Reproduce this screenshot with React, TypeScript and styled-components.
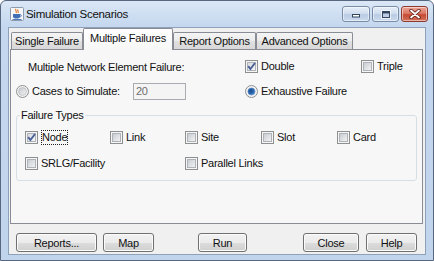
import React from 'react';
import styled, { createGlobalStyle } from 'styled-components';

const GlobalStyle = createGlobalStyle`
  html, body { margin: 0; padding: 0; background: #ffffff; }
  body {
    font-family: 'Liberation Sans', Arial, sans-serif;
    font-size: 11px;
    color: #111;
  }
`;

const Window = styled.div`
  box-sizing: border-box;
  width: 434px;
  height: 261px;
  display: flex;
  flex-direction: column;
  border: 1px solid #56677f;
  border-radius: 6px 6px 0 0;
  background: linear-gradient(#dae7f6, #c4d7ee 26px, #c0d4ec);
  overflow: hidden;
`;

const TitleBar = styled.div`
  height: 26px;
  display: flex;
  align-items: center;
  padding: 0 5px 0 9px;
`;

const TitleText = styled.span`
  margin-left: 2px;
  font-size: 11.5px;
  letter-spacing: -0.3px;
  line-height: 26px;
  color: #111;
`;

const CaptionGroup = styled.div`
  display: flex;
  gap: 2px;
  margin-left: auto;
  align-self: flex-start;
  margin-top: 5px;
`;

const CaptionButton = styled.div<{ $w: number; $close?: boolean }>`
  box-sizing: border-box;
  width: ${p => p.$w}px;
  height: 16px;
  display: flex;
  align-items: center;
  justify-content: center;
  border: 1px solid ${p => (p.$close ? '#8e3b2e' : '#7a8da7')};
  border-radius: 3px;
  background: ${p =>
    p.$close
      ? 'linear-gradient(#eda596, #dc7a66 45%, #c64b33 55%, #d2705a)'
      : 'linear-gradient(#e6eef8, #d2deef 45%, #b9cbe3 55%, #cbdaee)'};
  box-shadow: inset 0 0 0 1px rgba(255, 255, 255, 0.5);
`;

const Client = styled.div`
  flex: 1;
  margin: 0 7px 5px;
  border: 1px solid #8ea1ba;
  background: #f0f0f0;
  display: flex;
  flex-direction: column;
  letter-spacing: -0.25px;
`;

const TabStrip = styled.div`
  height: 21px;
  display: flex;
  align-items: flex-end;
  padding-left: 2px;
  position: relative;
  z-index: 1;
`;

const Tab = styled.div<{ $w: number; $active?: boolean }>`
  box-sizing: border-box;
  position: relative;
  width: ${p => p.$w}px;
  height: ${p => (p.$active ? 22 : 17)}px;
  margin-bottom: ${p => (p.$active ? -1 : 0)}px;
  padding-top: ${p => (p.$active ? 2 : 1)}px;
  border: 1px solid #898c95;
  border-bottom: none;
  border-radius: 2px 2px 0 0;
  line-height: 14px;
  text-align: center;
  white-space: nowrap;
  background: ${p =>
    p.$active
      ? 'linear-gradient(#ffffff, #f7f7f7)'
      : 'linear-gradient(#f4f4f4, #ebebeb 50%, #e0e0e0 51%, #d8d8d8)'};
`;

const Panel = styled.div`
  flex: 1;
  margin: 0 2px 0 1px;
  border: 1px solid #898c95;
  background: #f7f7f7;
  padding: 8px 5px 0;
`;

const OptionGrid = styled.div`
  display: grid;
  grid-template-columns: 229px 116px auto;
  grid-template-rows: 17px 18px;
  row-gap: 7px;
  align-items: center;
`;

const FieldLabel = styled.span<{ $indent?: number; $w?: number }>`
  padding-left: ${p => p.$indent ?? 0}px;
  width: ${p => (p.$w ? `${p.$w}px` : 'auto')};
  white-space: nowrap;
`;

const Item = styled.label`
  display: flex;
  align-items: center;
  gap: 3px;
  white-space: nowrap;
`;

const ItemText = styled.span<{ $focus?: boolean }>`
  border: ${p => (p.$focus ? '1px dotted #222' : 'none')};
  line-height: 13px;
`;

const NumberInput = styled.div`
  box-sizing: border-box;
  width: 53px;
  height: 17px;
  border: 1px solid #a9abb0;
  background: #f4f4f4;
  color: #6d6d6d;
  padding-left: 2px;
  line-height: 15px;
`;

const Group = styled.fieldset`
  margin: 9px 0 0;
  padding: 0;
  border: 1px solid #d5dfe5;
  border-radius: 3px;
  min-width: 0;
`;

const Legend = styled.legend`
  margin-left: 3px;
  padding: 0 1px;
  line-height: 13px;
`;

const TypeGrid = styled.div`
  display: grid;
  grid-template-columns: 85px 75px 76px 76px auto;
  grid-auto-rows: 15px;
  row-gap: 11px;
  align-items: center;
  padding: 8px 0 9px 8px;
`;

const ButtonBar = styled.div`
  height: 30px;
  box-sizing: border-box;
  display: flex;
  align-items: flex-start;
  padding: 9px 8px 0 7px;
`;

const ButtonGroup = styled.div<{ $gap: number; $push?: boolean }>`
  display: flex;
  gap: ${p => p.$gap}px;
  margin-left: ${p => (p.$push ? 'auto' : '0')};
`;

const Button = styled.button<{ $w: number; $offset?: number }>`
  box-sizing: border-box;
  width: ${p => p.$w}px;
  height: 19px;
  margin-left: ${p => p.$offset ?? 0}px;
  padding: 0;
  border: 1px solid #707070;
  border-radius: 3px;
  background: linear-gradient(#f2f2f2, #ebebeb 50%, #dddddd 51%, #cfcfcf);
  box-shadow: inset 0 0 0 1px #fbfbfb;
  font: inherit;
  letter-spacing: inherit;
  color: #111;
`;

const JavaIcon = () => (
  <svg width="14" height="14" viewBox="0 0 14 14">
    <rect x="0.5" y="0.5" width="13" height="13" rx="1" fill="#f4f6fa" stroke="#8c9aae" />
    <path d="M6 2 C4.5 3.5 7.5 4 6 6 M8 2.5 C7 3.5 9 4.5 8 6" stroke="#e0701c" strokeWidth="1.1" fill="none" />
    <path d="M3 7 H10 V9.5 C10 11 8.5 11.5 6.5 11.5 C4.5 11.5 3 11 3 9.5 Z" fill="#3f6eb5" />
    <path d="M10 7.6 C11.8 7.6 11.8 9.8 9.8 9.8" stroke="#3f6eb5" strokeWidth="1" fill="none" />
    <rect x="2.5" y="12" width="9" height="0.9" fill="#3f6eb5" />
  </svg>
);

const MinGlyph = () => (
  <svg width="10" height="8" viewBox="0 0 10 8">
    <rect x="1.5" y="4.5" width="7" height="2.5" fill="#fff" stroke="#33465f" />
  </svg>
);

const MaxGlyph = () => (
  <svg width="10" height="9" viewBox="0 0 10 9">
    <rect x="1.5" y="1.5" width="7" height="6" fill="none" stroke="#33465f" strokeWidth="1" />
    <rect x="2" y="2" width="6" height="1.5" fill="#33465f" />
    <rect x="0.5" y="0.5" width="9" height="8" fill="none" stroke="#fff" strokeOpacity="0.7" />
  </svg>
);

const CloseGlyph = () => (
  <svg width="12" height="10" viewBox="0 0 12 10">
    <path d="M2 1.5 L10 8.5 M10 1.5 L2 8.5" stroke="#5a1a10" strokeWidth="3.4" strokeLinecap="round" />
    <path d="M2 1.5 L10 8.5 M10 1.5 L2 8.5" stroke="#fff" strokeWidth="1.8" strokeLinecap="round" />
  </svg>
);

const CheckBox = ({ checked }: { checked?: boolean }) => (
  <svg width="13" height="13" viewBox="0 0 13 13" style={{ flex: 'none' }}>
    <defs>
      <linearGradient id="cbInner" x1="0" y1="0" x2="1" y2="1">
        <stop offset="0" stopColor="#c6cad0" />
        <stop offset="1" stopColor="#f5f5f5" />
      </linearGradient>
      <linearGradient id="cbInnerOn" x1="0" y1="0" x2="1" y2="1">
        <stop offset="0" stopColor="#d6d9de" />
        <stop offset="1" stopColor="#f8f8f8" />
      </linearGradient>
    </defs>
    <rect x="0.5" y="0.5" width="12" height="12" fill="#f6f6f6" stroke="#8e8f8f" />
    <rect x="2.5" y="2.5" width="8" height="8" fill={checked ? 'url(#cbInnerOn)' : 'url(#cbInner)'} stroke="#aeb3b9" />
    {checked && (
      <path d="M3.2 6.2 L5.4 9 L10 3" stroke="#4a5f97" strokeWidth="1.9" fill="none" />
    )}
  </svg>
);

const Radio = ({ checked }: { checked?: boolean }) => (
  <svg width="13" height="13" viewBox="0 0 13 13" style={{ flex: 'none' }}>
    <defs>
      <linearGradient id="rdInner" x1="0" y1="0" x2="1" y2="1">
        <stop offset="0" stopColor="#c3c7cd" />
        <stop offset="1" stopColor="#f3f3f3" />
      </linearGradient>
      <radialGradient id="rdDot" cx="0.4" cy="0.4" r="0.7">
        <stop offset="0" stopColor="#1a4d8c" />
        <stop offset="0.6" stopColor="#2c69b0" />
        <stop offset="1" stopColor="#7fb6e6" />
      </radialGradient>
    </defs>
    <circle cx="6.5" cy="6.5" r="6" fill="#f4f4f4" stroke="#8e8f8f" />
    {checked ? (
      <circle cx="6.5" cy="6.5" r="3.6" fill="url(#rdDot)" stroke="#5b87c0" strokeWidth="0.6" />
    ) : (
      <circle cx="6.5" cy="6.5" r="4" fill="url(#rdInner)" stroke="#b0b4ba" strokeWidth="0.6" />
    )}
  </svg>
);

const tabs = [
  { label: 'Single Failure', w: 72 },
  { label: 'Multiple Failures', w: 90, active: true },
  { label: 'Report Options', w: 83 },
  { label: 'Advanced Options', w: 97 },
];

const failureTypes = [
  { label: 'Node', checked: true, focus: true },
  { label: 'Link' },
  { label: 'Site' },
  { label: 'Slot' },
  { label: 'Card' },
  { label: 'SRLG/Facility', span: 2 },
  { label: 'Parallel Links' },
];

const App = () => (
  <>
    <GlobalStyle />
    <Window>
      <TitleBar>
        <JavaIcon />
        <TitleText>Simulation Scenarios</TitleText>
        <CaptionGroup>
          <CaptionButton $w={28}><MinGlyph /></CaptionButton>
          <CaptionButton $w={27}><MaxGlyph /></CaptionButton>
          <CaptionButton $w={27} $close><CloseGlyph /></CaptionButton>
        </CaptionGroup>
      </TitleBar>

      <Client>
        <TabStrip>
          {tabs.map(t => (
            <Tab key={t.label} $w={t.w} $active={t.active}>{t.label}</Tab>
          ))}
        </TabStrip>

        <Panel>
          <OptionGrid>
            <FieldLabel $indent={12}>Multiple Network Element Failure:</FieldLabel>
            <Item><CheckBox checked /><ItemText>Double</ItemText></Item>
            <Item><CheckBox /><ItemText>Triple</ItemText></Item>

            <Item>
              <Radio />
              <FieldLabel $w={98}>Cases to Simulate:</FieldLabel>
              <NumberInput>20</NumberInput>
            </Item>
            <Item><Radio checked /><ItemText>Exhaustive Failure</ItemText></Item>
            <span />
          </OptionGrid>

          <Group>
            <Legend>Failure Types</Legend>
            <TypeGrid>
              {failureTypes.map(f => (
                <Item key={f.label} style={f.span ? { gridColumn: `span ${f.span}` } : undefined}>
                  <CheckBox checked={f.checked} />
                  <ItemText $focus={f.focus}>{f.label}</ItemText>
                </Item>
              ))}
            </TypeGrid>
          </Group>
        </Panel>

        <ButtonBar>
          <ButtonGroup $gap={6}>
            <Button $w={81}>Reports...</Button>
            <Button $w={51}>Map</Button>
          </ButtonGroup>
          <Button $w={49} $offset={44}>Run</Button>
          <ButtonGroup $gap={7} $push>
            <Button $w={56}>Close</Button>
            <Button $w={51}>Help</Button>
          </ButtonGroup>
        </ButtonBar>
      </Client>
    </Window>
  </>
);

export default App;
